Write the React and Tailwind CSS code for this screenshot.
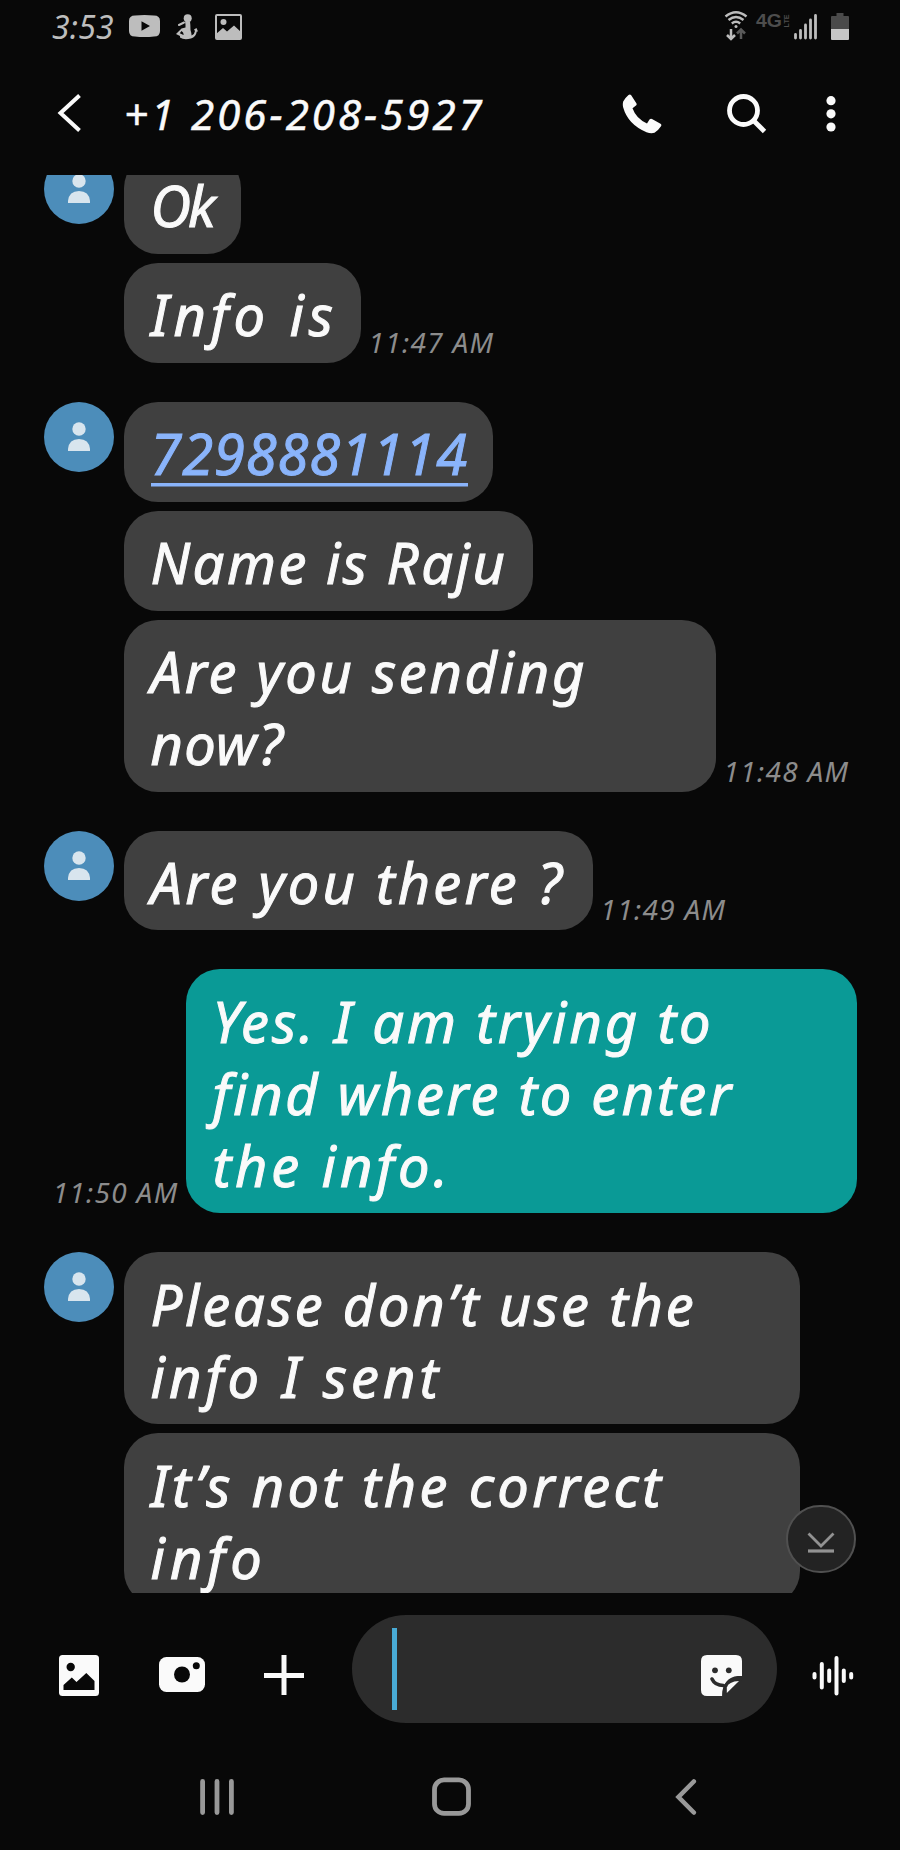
const threads = [
  {
    time: '11:47 AM',
    bubbles: [
      { width: 'w-[117px]', lines: [['Ok', 'tracking-[-3px]']] },
      { width: 'w-[237px]', lines: [['Info is', 'tracking-[4.9px]']] },
    ],
  },
  {
    time: '11:48 AM',
    bubbles: [
      { width: 'w-[369px]', link: true, lines: [['7298881114', 'tracking-[0.9px]']] },
      { width: 'w-[409px]', lines: [['Name is Raju', 'tracking-[2.5px]']] },
      {
        width: 'w-[592px]',
        lines: [['Are you sending', 'tracking-[2.7px]'], ['now?', 'tracking-[1.3px]']],
      },
    ],
  },
  {
    time: '11:49 AM',
    bubbles: [{ width: 'w-[469px]', lines: [['Are you there ?', 'tracking-[3.2px]']] }],
  },
  {
    time: '11:50 AM',
    mine: true,
    bubbles: [
      {
        width: 'w-[671px]',
        lines: [
          ['Yes. I am trying to', 'tracking-[2.9px]'],
          ['find where to enter', 'tracking-[2.7px]'],
          ['the info.', 'tracking-[3.9px]'],
        ],
      },
    ],
  },
  {
    bubbles: [
      {
        width: 'w-[676px]',
        lines: [['Please don’t use the', 'tracking-[2.8px]'], ['info I sent', 'tracking-[4.1px]']],
      },
      {
        width: 'w-[676px]',
        lines: [['It’s not the correct', 'tracking-[3.3px]'], ['info', 'tracking-[5px]']],
      },
    ],
  },
]

function StatusBar() {
  return (
    <div className="h-[54px] shrink-0 flex items-start pl-[52px] pr-[51px] pt-[11px] text-[#bdbdbd]">
      <span className="w-[77px] text-[32px] leading-[32px] tracking-[0.2px]">3:53</span>
      <svg className="w-[31px] h-[22px] mt-1" viewBox="0 0 31 22" fill="currentColor">
        <path fillRule="evenodd" d="M6 0.5Q15.500-.5 25 .5Q31 .5 31 6V16Q31 21.500 25 21.500Q15.500 22.500 6 21.500Q0 21.500 0 16V6Q0 .5 6 .5ZM12.500 6.200V15.800L21 11Z" />
      </svg>
      <svg className="w-[22px] h-[26px] mt-[3px] ml-4" viewBox="0 0 22 26" fill="currentColor">
        <circle cx="11.700" cy="4.200" r="4" />
        <path fillRule="evenodd" d="M9 7.500L14 7.500Q14.500 11 14.500 16Q15.500 19 15.600 21.500Q18.500 20.500 19 17L18 15.500L20.500 14L22 17.500L20.800 17.500Q20 23 15 24.500Q8 26.500 4 23.500L4 22L0 20L5.500 14.500L9.500 13.500L9.500 10.500ZM5.500 17L3.800 19.300L7.500 21Q8 18.500 5.500 17Z" />
        <path d="M8 8.500L3 11" stroke="currentColor" strokeWidth="2" strokeLinecap="round" />
      </svg>
      <svg className="w-[27px] h-[26px] mt-[3px] ml-[17px]" viewBox="0 0 27 26">
        <rect x="1" y="1" width="25" height="24" rx="1" fill="none" stroke="currentColor" strokeWidth="2" />
        <circle cx="8.500" cy="8" r="3" fill="currentColor" />
        <path d="M1 20L8 14L12 17.500L19 11.500L26 18V25H1Z" fill="currentColor" />
      </svg>

      <svg className="w-[24px] h-[30px] ml-auto" viewBox="0 0 24 30" fill="none" stroke="currentColor">
        <path d="M1.500 5.500Q12 -3 22.500 5.500" strokeWidth="2.400" />
        <path d="M4.500 9Q12 3 19.500 9" strokeWidth="2.400" />
        <path d="M7.800 12.500Q12 9 16.200 12.500" strokeWidth="2.400" />
        <circle cx="12" cy="15.600" r="1.500" fill="currentColor" stroke="none" />
        <path d="M7 18V27M3 24L7 28L11 24" strokeWidth="2.500" />
        <path d="M17 28V19M13 22.500L17 18.500L21 22.500" stroke="#5a5a5a" strokeWidth="2.500" />
      </svg>
      <svg className="w-[33px] h-[16px] mt-[2px] ml-[8px] overflow-visible not-italic" viewBox="0 0 33 16" fill="#4d4d4d">
        <text x="0" y="14" fontSize="18" fontWeight="700" fontFamily="Liberation Sans, sans-serif" textLength="26" lengthAdjust="spacingAndGlyphs">4G</text>
        <text transform="translate(32.500 14.500) rotate(-90)" fontSize="7" fontWeight="700" fontFamily="Liberation Sans, sans-serif" textLength="13">LTE</text>
      </svg>
      <svg className="w-[23px] h-[26px] mt-[3px] ml-[5px]" viewBox="0 0 23 26" stroke="currentColor" strokeWidth="2.800" strokeLinecap="round">
        <path d="M1.500 20.500V24M6.500 16.500V24M11.500 11V24M16.500 6V24M21.500 1.500V24" />
      </svg>
      <svg className="w-[18px] h-[28px] mt-[2px] ml-[14px]" viewBox="0 0 18 28">
        <path d="M5.500 0H12.500V3H17Q18 3 18 4V16H0V4Q0 3 1 3H5.500Z" fill="#4a4a4a" />
        <path d="M0 16H18V26Q18 27 17 27H1Q0 27 0 26Z" fill="#c6c6c6" />
      </svg>
    </div>
  )
}

function Header() {
  return (
    <div className="h-[121px] shrink-0 flex items-start pl-[57px] pr-[64.5px] pt-[38px]">
      <svg className="w-[26px] h-[42px]" viewBox="0 0 26 42" fill="none" stroke="#fafafa" strokeWidth="4">
        <path d="M22.500 3.500L3.500 21L22.500 38.500" />
      </svg>
      <span className="ml-[41px] mt-px text-[42px] leading-[42px] tracking-[3px] whitespace-nowrap [-webkit-text-stroke:0.5px_#fafafa]">
        +1 206-208-5927
      </span>
      <svg className="w-[40px] h-[40px] mt-[2px] ml-auto" viewBox="0 0 40 40" fill="#fafafa">
        <path d="M1.200 7.500Q3 4 6.500 1Q8 -.2 9.200 1.200L14.500 9.500Q15 10.800 14 11.600L10.500 14.300Q14 24.500 25 29.500L27.500 25.600Q28.500 24.300 30 25L38.500 29.700Q40 30.700 39 32.300Q36 36.800 32.500 38.800Q29 40 24.500 38.200Q6 30.500 1.200 13.500Q.4 10.300 1.200 7.500Z" />
      </svg>
      <svg className="w-[40px] h-[40px] mt-[2px] ml-[65px]" viewBox="0 0 40 40" fill="none" stroke="#fafafa">
        <circle cx="16.500" cy="16.500" r="14" strokeWidth="4.800" />
        <path d="M26.500 26.500L37.500 37.500" strokeWidth="4.800" />
      </svg>
      <svg className="w-[10px] h-[36px] mt-[4px] ml-[59px]" viewBox="0 0 10 36" fill="#fafafa">
        <circle cx="5" cy="4.700" r="4.600" />
        <circle cx="5" cy="17.800" r="4.600" />
        <circle cx="5" cy="31" r="4.600" />
      </svg>
    </div>
  )
}

function Avatar() {
  return (
    <div className="w-[70px] h-[70px] shrink-0 rounded-full bg-[#4c8dba] flex justify-center pt-5">
      <svg className="w-[22px] h-[30px]" viewBox="0 0 22 30" fill="#d8e5ee">
        <circle cx="11" cy="7" r="6.700" />
        <path d="M0 29V27Q1 17 11 17Q21 17 22 27V29Z" />
      </svg>
    </div>
  )
}

function Bubble({ bubble, mine }) {
  return (
    <div className={`${bubble.width} ${mine ? 'bg-[#0a9a96]' : 'bg-[#404040]'} rounded-[34px] pt-[15.3px] pb-[12.5px] pl-[27px] shrink-0`}>
      {bubble.lines.map(([text, tracking]) => (
        <div
          key={text}
          className={`${tracking} ${
            bubble.link
              ? 'text-[#8ab4fb] [-webkit-text-stroke:1px_#8ab4fb]'
              : 'text-[#fafafa] [-webkit-text-stroke:1px_#fafafa]'
          } h-[72px] text-[56px] leading-[72px] whitespace-nowrap`}
        >
          {bubble.link ? (
            <a className="inline-block h-[72px] bg-[linear-gradient(#8ab4fb,#8ab4fb)] bg-[length:100%_3.5px] bg-[position:0_66px] bg-no-repeat">
              {text}
            </a>
          ) : (
            text
          )}
        </div>
      ))}
    </div>
  )
}

function Time({ children }) {
  return (
    <span className="mb-[7px] text-[28px] leading-[28px] tracking-[1.3px] whitespace-nowrap text-[#8c8c8c]">
      {children}
    </span>
  )
}

function Thread({ thread }) {
  if (thread.mine) {
    return (
      <div className="flex items-end justify-end gap-[7px] pr-[43.5px]">
        <Time>{thread.time}</Time>
        <Bubble bubble={thread.bubbles[0]} mine />
      </div>
    )
  }
  return (
    <div className="flex items-start gap-[9.5px] pl-[44px]">
      <Avatar />
      <div className="flex flex-col gap-[9.3px]">
        {thread.bubbles.map((bubble, i) => (
          <div key={i} className="flex items-end gap-[8px]">
            <Bubble bubble={bubble} />
            {thread.time && i === thread.bubbles.length - 1 && <Time>{thread.time}</Time>}
          </div>
        ))}
      </div>
    </div>
  )
}

function Composer() {
  return (
    <div className="h-[152px] shrink-0 flex items-start pl-[59px] pr-[46.5px] pt-[22px]">
      <svg className="w-[40px] h-[41px] mt-[40px]" viewBox="0 0 40 41">
        <rect width="40" height="41" rx="3.500" fill="#fafafa" />
        <circle cx="11.700" cy="12" r="4.200" fill="#080808" />
        <path d="M4.500 35V30L12.800 22.500L17.500 27L27.300 18L35.500 26V35Z" fill="#080808" />
      </svg>
      <svg className="w-[46px] h-[35px] mt-[42px] ml-[60px]" viewBox="0 0 46 35">
        <rect width="46" height="35" rx="7.500" fill="#fafafa" />
        <circle cx="23" cy="17.500" r="8" fill="#080808" />
        <circle cx="37.300" cy="8.700" r="3.500" fill="#080808" />
      </svg>
      <svg className="w-[40px] h-[40px] mt-[40px] ml-[59px]" viewBox="0 0 40 40" stroke="#fafafa" strokeWidth="5">
        <path d="M20 0V40M0 20.500H40" />
      </svg>
      <div className="ml-[48px] w-[425px] h-[108px] rounded-full bg-[#2c2c2c] flex items-start pl-[40px] pr-[35px] pt-[13px]">
        <div className="w-[5px] h-[82px] bg-[#49abd5]" />
        <svg className="w-[41px] h-[41px] mt-[27px] ml-auto" viewBox="0 0 41 41">
          <path d="M6 0H35Q41 0 41 6V21H37Q22 22 21.500 41H6Q0 41 0 35V6Q0 0 6 0Z" fill="#fafafa" />
          <circle cx="14" cy="15.300" r="2.900" fill="#2c2c2c" />
          <circle cx="27.800" cy="15.300" r="2.900" fill="#2c2c2c" />
          <path d="M11 24Q14 30.500 22.500 30.500" fill="none" stroke="#2c2c2c" strokeWidth="3.600" strokeLinecap="round" />
          <path d="M23.200 41Q22.500 24 41 23" fill="none" stroke="#2c2c2c" strokeWidth="4" />
          <path d="M25.800 38V32.500Q27.500 26.500 38 26Z" fill="#fafafa" />
        </svg>
      </div>
      <svg className="w-[42px] h-[41px] mt-[39.5px] ml-auto" viewBox="0 0 42 41" stroke="#fafafa" strokeWidth="4" strokeLinecap="round">
        <path d="M2.500 19V22.500M9.800 9V32.500M17.200 15.500V26M24.500 3V38.500M31.800 15.500V26M39.200 19V22.500" />
      </svg>
    </div>
  )
}

function NavBar() {
  return (
    <div className="grow flex items-start pl-[200px] pt-[32px]">
      <svg className="w-[34px] h-[38px] mt-[1px]" viewBox="0 0 34 38" stroke="#999" strokeWidth="4.800" strokeLinecap="round">
        <path d="M2.600 3.500V34.500M17 3.500V34.500M31.400 3.500V34.500" />
      </svg>
      <svg className="w-[39px] h-[39px] ml-[198px]" viewBox="0 0 39 39" fill="none" stroke="#999" strokeWidth="4.800">
        <rect x="2.500" y="2.900" width="34" height="33.500" rx="9.500" />
      </svg>
      <svg className="w-[22px] h-[38px] mt-[1px] ml-[204px]" viewBox="0 0 22 38" fill="none" stroke="#999" strokeWidth="4.600" strokeLinecap="round">
        <path d="M18.800 3.500L3.500 19L18.800 34.500" />
      </svg>
    </div>
  )
}

export default function App() {
  return (
    <div className="w-[900px] h-[1850px] flex flex-col overflow-hidden bg-[#080808] text-[#fafafa] italic font-['Noto_Sans','Open_Sans',sans-serif] [font-variant-ligatures:none]">
      <StatusBar />
      <Header />
      <div className="relative h-[1418px] shrink-0 overflow-hidden">
        <div className="-mt-[21.2px] flex flex-col gap-[39px]">
          {threads.map((thread, i) => (
            <Thread key={i} thread={thread} />
          ))}
        </div>
        <div className="absolute right-[44px] bottom-[20px] w-[70px] h-[68px] rounded-full border-2 border-[#505050] bg-[#232323] flex justify-center">
          <svg className="w-[28px] h-[22px] mt-[25px]" viewBox="0 0 28 22" fill="none" stroke="#929292">
            <path d="M1.500 1.500L14 14L26.500 1.500" strokeWidth="2.800" />
            <path d="M1 19H27" strokeWidth="3.200" />
          </svg>
        </div>
      </div>
      <Composer />
      <NavBar />
    </div>
  )
}
